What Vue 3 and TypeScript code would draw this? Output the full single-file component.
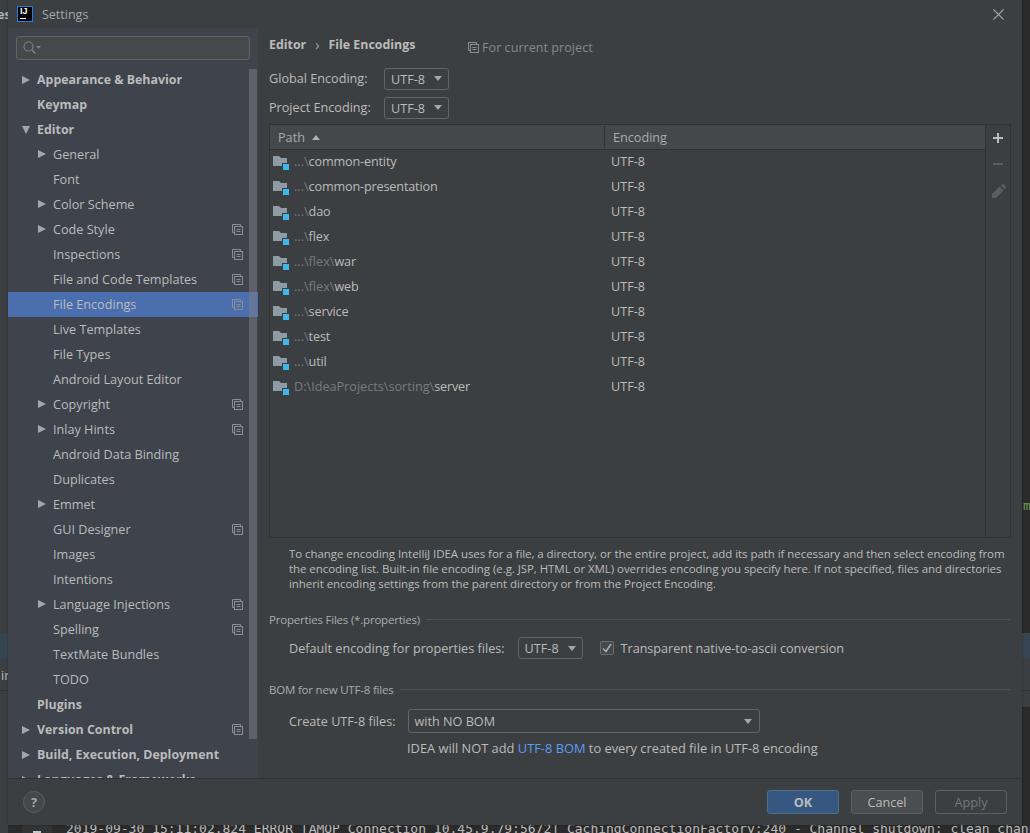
<script setup lang="ts">
interface NavItem { label: string; level: number; bold?: boolean; arrow?: 'right' | 'down'; copy?: boolean; selected?: boolean }
const nav: NavItem[] = [
  { label: 'Appearance & Behavior', level: 0, bold: true, arrow: 'right' },
  { label: 'Keymap', level: 0, bold: true },
  { label: 'Editor', level: 0, bold: true, arrow: 'down' },
  { label: 'General', level: 1, arrow: 'right' },
  { label: 'Font', level: 1 },
  { label: 'Color Scheme', level: 1, arrow: 'right' },
  { label: 'Code Style', level: 1, arrow: 'right', copy: true },
  { label: 'Inspections', level: 1, copy: true },
  { label: 'File and Code Templates', level: 1, copy: true },
  { label: 'File Encodings', level: 1, copy: true, selected: true },
  { label: 'Live Templates', level: 1 },
  { label: 'File Types', level: 1 },
  { label: 'Android Layout Editor', level: 1 },
  { label: 'Copyright', level: 1, arrow: 'right', copy: true },
  { label: 'Inlay Hints', level: 1, arrow: 'right', copy: true },
  { label: 'Android Data Binding', level: 1 },
  { label: 'Duplicates', level: 1 },
  { label: 'Emmet', level: 1, arrow: 'right' },
  { label: 'GUI Designer', level: 1, copy: true },
  { label: 'Images', level: 1 },
  { label: 'Intentions', level: 1 },
  { label: 'Language Injections', level: 1, arrow: 'right', copy: true },
  { label: 'Spelling', level: 1, copy: true },
  { label: 'TextMate Bundles', level: 1 },
  { label: 'TODO', level: 1 },
  { label: 'Plugins', level: 0, bold: true },
  { label: 'Version Control', level: 0, bold: true, arrow: 'right', copy: true },
  { label: 'Build, Execution, Deployment', level: 0, bold: true, arrow: 'right' },
  { label: 'Languages & Frameworks', level: 0, bold: true, arrow: 'right' },
]
const rows: [string, string][] = [
  ['...\\', 'common-entity'],
  ['...\\', 'common-presentation'],
  ['...\\', 'dao'],
  ['...\\', 'flex'],
  ['...\\flex\\', 'war'],
  ['...\\flex\\', 'web'],
  ['...\\', 'service'],
  ['...\\', 'test'],
  ['...\\', 'util'],
  ['D:\\IdeaProjects\\sorting\\', 'server'],
]
</script>

<template>
  <div class="desk">
    <div class="bg-left"></div>
    <div class="bg-tab">es</div>
    <div class="bg-band"></div>
    <div class="bg-line l1"></div>
    <div class="bg-in">ir</div>
    <div class="bg-right"><i></i></div>
    <div class="bg-gutter"><i></i></div>
    <div class="bg-m">m</div>
    <div class="bg-log">2019-09-30 15:11:02.824 ERROR [AMQP Connection 10.45.9.79:5672] CachingConnectionFactory:240 - Channel shutdown: clean channel</div>

    <div class="dialog">
      <header class="titlebar">
        <div class="logo"><span class="logo-text">IJ</span><span class="logo-bar"></span></div>
        <span class="title">Settings</span>
        <svg class="close" width="11" height="11" viewBox="0 0 11 11"><path d="M.5.5l10 10M10.500.5l-10 10" stroke="#a0a3a5" stroke-width="1.100" fill="none"/></svg>
      </header>

      <div class="body">
        <aside class="side">
          <div class="search">
            <svg width="20" height="16" viewBox="0 0 20 16"><circle cx="6.500" cy="6.500" r="4.500" fill="none" stroke="#7e8285" stroke-width="1.200"/><path d="M10 10l3.500 3.500" stroke="#7e8285" stroke-width="1.500"/><path d="M14 6h5l-2.500 3z" fill="#7e8285"/></svg>
          </div>
          <div class="nav">
            <div v-for="n in nav" :key="n.label" class="nav-row" :class="[`lvl${n.level}`, { selected: n.selected, bold: n.bold }]">
              <span v-if="n.arrow" class="arrow" :class="n.arrow"></span>
              <span class="nav-label">{{ n.label }}</span>
              <svg v-if="n.copy" class="copy" width="11" height="11" viewBox="0 0 11 11"><path d="M2.500 8.500h-2v-8h8v2" fill="none" stroke="#8a8e91"/><rect x="2.500" y="2.500" width="8" height="8" fill="none" stroke="#8a8e91"/><path d="M4.500 5.500h4M4.500 7.500h4" stroke="#8a8e91"/></svg>
            </div>
          </div>
          <div class="scrollbar"></div>
        </aside>

        <main class="main">
          <div class="crumbs">
            <b>Editor</b><span class="chev">›</span><b>File Encodings</b>
            <span class="scope">
              <svg width="11" height="11" viewBox="0 0 11 11"><path d="M2.500 8.500h-2v-8h8v2" fill="none" stroke="#8a8e91"/><rect x="2.500" y="2.500" width="8" height="8" fill="none" stroke="#8a8e91"/><path d="M4.500 5.500h4M4.500 7.500h4" stroke="#8a8e91"/></svg>
              For current project
            </span>
          </div>
          <div class="enc-row"><span class="enc-label">Global Encoding:</span><span class="combo">UTF-8<i class="caret"></i></span></div>
          <div class="enc-row second"><span class="enc-label">Project Encoding:</span><span class="combo">UTF-8<i class="caret"></i></span></div>

          <div class="table">
            <div class="table-main">
              <div class="thead">
                <div class="th path">Path<i class="sort"></i></div>
                <div class="th">Encoding</div>
              </div>
              <div v-for="r in rows" :key="r[0] + r[1]" class="tr">
                <div class="td path">
                  <svg class="folder" width="16" height="15" viewBox="0 0 16 15"><path d="M0 1h6l2 2h6v8H0z" fill="#8c9ba4"/><rect x="9" y="8" width="6" height="6" fill="#3c3f41"/><rect x="10" y="9" width="6" height="6" fill="#3db8e8"/></svg>
                  <span class="dim">{{ r[0] }}</span><span class="name">{{ r[1] }}</span>
                </div>
                <div class="td">UTF-8</div>
              </div>
            </div>
            <div class="tools">
              <svg width="12" height="12" viewBox="0 0 12 12"><path d="M6 1v10M1 6h10" stroke="#bbbdbf" stroke-width="2"/></svg>
              <svg width="12" height="12" viewBox="0 0 12 12"><path d="M1 6h10" stroke="#5b5e60" stroke-width="2"/></svg>
              <svg class="pencil" width="14" height="14" viewBox="0 0 14 14"><path d="M0 14v-4l7.500-7.500 4 4L4 14zM9 1.500L10.500 0a1 1 0 0 1 1 0l2.500 2.500a1 1 0 0 1 0 1L12.500 5z" fill="#5b5e60"/></svg>
            </div>
          </div>

          <p class="help">To change encoding IntelliJ IDEA uses for a file, a directory, or the entire project, add its path if necessary and then select encoding from the encoding list. Built-in file encoding (e.g. JSP, HTML or XML) overrides encoding you specify here. If not specified, files and directories inherit encoding settings from the parent directory or from the Project Encoding.</p>

          <div class="group"><span>Properties Files (*.properties)</span><i></i></div>
          <div class="prop-row">
            <span>Default encoding for properties files:</span>
            <span class="combo">UTF-8<i class="caret"></i></span>
            <span class="check"><svg width="10" height="10" viewBox="0 0 10 10"><path d="M1 5.500l3 3 5-7.500" fill="none" stroke="#a9acae" stroke-width="1.600"/></svg></span>
            <span class="check-label">Transparent native-to-ascii conversion</span>
          </div>

          <div class="group bom"><span>BOM for new UTF-8 files</span><i></i></div>
          <div class="bom-row">
            <span>Create UTF-8 files:</span>
            <span class="combo wide">with NO BOM<i class="caret"></i></span>
          </div>
          <div class="bom-note">IDEA will NOT add <span class="link">UTF-8 BOM</span> to every created file in UTF-8 encoding</div>
        </main>
      </div>

      <footer class="footer">
        <span class="help-btn">?</span>
        <span class="btn primary">OK</span>
        <span class="btn">Cancel</span>
        <span class="btn disabled">Apply</span>
      </footer>
    </div>
  </div>
</template>

<style>
html, body { margin: 0; background: #2b2b2b; }
</style>

<style scoped>
.desk { position: relative; width: 1030px; height: 833px; overflow: hidden; background: #2b2b2b; font-family: "Open Sans", "Noto Sans", sans-serif; font-size: 12.650px; color: #bbbbbb; }
.bg-left { position: absolute; left: 0; top: 0; width: 8px; height: 833px; background: #3c3f41; }
.bg-tab { position: absolute; left: -3px; top: 5px; font-weight: 700; color: #a9b7c6; }
.bg-band { position: absolute; left: 0; top: 633px; width: 8px; height: 26px; background: #374552; }
.bg-line { position: absolute; left: 0; width: 8px; height: 1px; background: #323232; }
.bg-line.l1 { top: 690px; }
.bg-in { position: absolute; left: 1px; top: 666px; }
.bg-right { position: absolute; left: 1022px; top: 633px; width: 8px; height: 74px; box-sizing: border-box; background: #3c3f41; border-top: 26px solid #374552; }
.bg-right i { position: absolute; left: 0; top: 31px; width: 8px; height: 1px; background: #323232; }
.bg-gutter { position: absolute; left: 22px; top: 825px; width: 30px; height: 8px; background: #313335; }
.bg-gutter i { position: absolute; left: 11px; top: 6px; width: 8px; height: 2px; background: #c8c8c8; }
.bg-m { position: absolute; left: 1023px; top: 498px; color: #6f9a58; font-family: "DejaVu Sans Mono", monospace; font-size: 13px; }
.bg-log { position: absolute; left: 66px; top: 821px; white-space: nowrap; font-family: "DejaVu Sans Mono", monospace; font-size: 13px; color: #bbbbbb; }

.dialog { position: absolute; left: 8px; top: 0; width: 1014px; height: 825px; background: #3c3f41; display: flex; flex-direction: column; box-shadow: 0 0 2px rgba(0, 0, 0, .35); }
.titlebar { height: 28px; flex: none; display: flex; align-items: center; position: relative; padding-left: 9px; }
.logo { width: 16px; height: 16px; box-sizing: border-box; background: #000; border: 1px solid #1a7fe0; position: relative; }
.logo-text { position: absolute; left: 2px; top: -1px; font: 700 9px/11px "Liberation Sans", sans-serif; color: #fff; }
.logo-bar { position: absolute; left: 2px; bottom: 2px; width: 6px; height: 1px; background: #fff; }
.title { margin-left: 9px; color: #a4a7a9; font-size: 12.500px; }
.close { position: absolute; left: 985px; top: 9px; }

.body { flex: 1; display: flex; min-height: 0; }
.side { width: 250px; flex: none; background: #3e434c; position: relative; overflow: hidden; }
.search { margin: 8px 8px 0; height: 24px; box-sizing: border-box; border: 1px solid #646464; border-radius: 3px; background: #45494a; padding: 3px 0 0 5px; }
.search svg { display: block; }
.nav { margin-top: 7px; }
.nav-row { height: 25px; display: flex; align-items: center; position: relative; box-sizing: border-box; padding-right: 16px; padding-bottom: 2px; }
.nav-row.lvl0 { padding-left: 29px; }
.nav-row.lvl1 { padding-left: 45px; }
.nav-row.bold { font-weight: 700; font-size: 12.400px; padding-bottom: 0; }
.nav-row.selected { background: #4b6eaf; }
.nav-label { white-space: nowrap; }
.arrow { position: absolute; width: 0; height: 0; }
.arrow.right { border-left: 8px solid #a4a7a9; border-top: 4.500px solid transparent; border-bottom: 4.500px solid transparent; }
.lvl0 .arrow { left: 14px; }
.lvl1 .arrow { left: 30px; }
.arrow.down { border-top: 8px solid #a4a7a9; border-left: 4.500px solid transparent; border-right: 4.500px solid transparent; }
.copy { position: absolute; left: 224px; top: 7px; }
.scrollbar { position: absolute; left: 241px; top: 41px; width: 8px; height: 670px; background: rgba(125, 128, 135, .5); }

.main { flex: 1; min-width: 0; padding: 0 11px 0 11px; }
.crumbs { height: 33px; display: flex; align-items: center; padding-bottom: 0; box-sizing: border-box; position: relative; color: #bbbbbb; }
.crumbs b { font-size: 12.400px; }
.chev { margin: 0 9px; color: #a4a7a9; font-size: 14px; }
.scope { position: absolute; left: 199px; top: 10px; display: flex; align-items: center; gap: 3px; color: #85888a; }
.enc-row { display: flex; align-items: center; height: 23px; margin-top: 6px; }
.enc-row.second { margin-top: 6px; }
.enc-label { width: 115px; padding-bottom: 2px; }
.combo { height: 22px; box-sizing: border-box; border: 1px solid #646464; border-radius: 3px; padding: 0 6px; display: inline-flex; align-items: center; gap: 9px; color: #bbbbbb; }
.caret { width: 0; height: 0; border-top: 5px solid #a4a7a9; border-left: 4.500px solid transparent; border-right: 4.500px solid transparent; }
.combo.wide { width: 352px; justify-content: space-between; height: 24px; padding-right: 7px; }

.table { height: 414px; margin-top: 5px; box-sizing: border-box; border: 1px solid #323232; display: flex; }
.table-main { flex: 1; min-width: 0; }
.thead { height: 25px; box-sizing: border-box; background: #45484a; border-bottom: 1px solid #323232; display: flex; }
.th { flex: 1; display: flex; align-items: center; padding-left: 8px; position: relative; color: #a9abad; }
.th.path, .td.path { width: 335px; flex: none; box-sizing: border-box; }
.th.path { border-right: 1px solid #323232; margin: 1px 0; }
.sort { margin-left: 7px; width: 0; height: 0; border-bottom: 5px solid #b0b2b4; border-left: 4.500px solid transparent; border-right: 4.500px solid transparent; }
.tr { height: 25px; display: flex; align-items: center; padding-bottom: 4px; box-sizing: border-box; }
.td { padding-left: 6px; white-space: nowrap; }
.td.path { padding-left: 3px; display: flex; align-items: center; }
.folder { margin-right: 5px; flex: none; position: relative; top: 2px; }
.dim { color: #787a7c; }
.name { letter-spacing: -.16px; }
.tools { width: 25px; flex: none; border-left: 1px solid #323232; display: flex; flex-direction: column; align-items: center; padding-top: 7px; box-sizing: border-box; gap: 14px; }
.pencil { position: relative; left: 1px; }

.help { margin: 8px 0 0 20px; width: 722px; font-size: 11.500px; letter-spacing: -.06px; line-height: 15px; color: #bbbbbb; }
.group { display: flex; align-items: center; gap: 6px; margin-top: 20px; height: 16px; font-size: 11.500px; letter-spacing: -.2px; color: #a9abad; }
.group i { flex: 1; height: 1px; background: #515151; margin-right: 1px; }
.group.bom { margin-top: 21px; }
.prop-row { display: flex; align-items: center; margin: 9px 0 0 20px; height: 24px; }
.prop-row .combo { margin-left: 13px; }
.check { width: 14px; height: 14px; margin: 0 7px 0 17px; box-sizing: border-box; border: 1px solid #6b6b6b; border-radius: 2px; background: #43494a; display: inline-flex; align-items: center; justify-content: center; }
.check-label { letter-spacing: -.04px; }
.bom-row { display: flex; align-items: center; margin: 12px 0 0 20px; height: 24px; }
.bom-row .combo { margin-left: 12px; }
.bom-note { margin: 6px 0 0 138px; font-size: 12.850px; }
.link { color: #589df6; }

.footer { height: 47px; flex: none; box-sizing: border-box; border-top: 1px solid #323232; display: flex; align-items: center; padding: 0 15px 0 15px; }
.help-btn { width: 22px; height: 22px; border-radius: 50%; box-sizing: border-box; border: 1px solid #5a5d5f; background: #45484a; text-align: center; line-height: 20px; font-weight: 700; color: #a4a7a9; margin-right: auto; }
.btn { width: 72px; height: 24px; box-sizing: border-box; border: 1px solid #5e6060; border-radius: 3px; background: #4b4e50; display: flex; align-items: center; justify-content: center; margin-left: 12px; color: #bbbbbb; }
.btn.primary { background: #365880; border-color: #4c708c; font-weight: 700; }
.btn.disabled { background: transparent; border-color: #5e6060; color: #777777; }
</style>
